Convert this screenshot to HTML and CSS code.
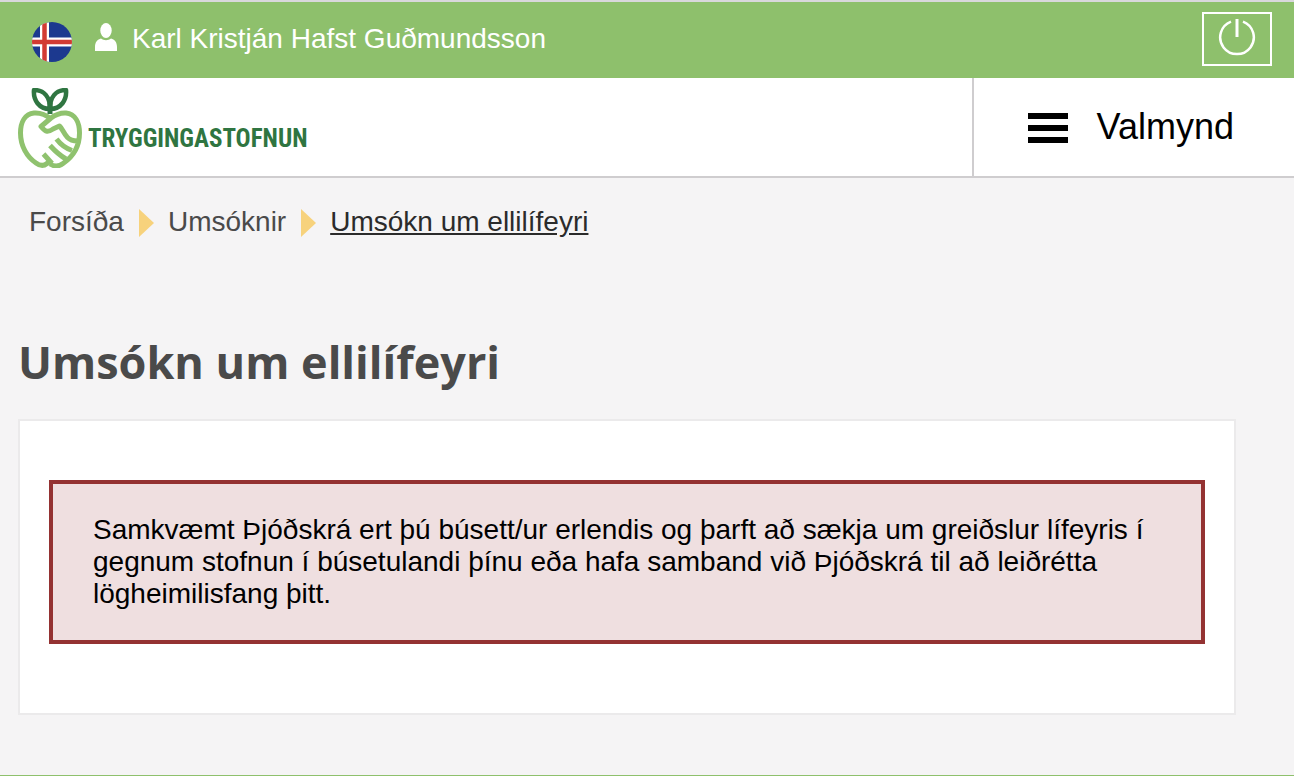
FILE: index.html
```html
<!DOCTYPE html>
<html lang="is">
<head>
  <meta charset="UTF-8" />
  <meta name="viewport" content="width=device-width, initial-scale=1" />
  <title>Umsókn um ellilífeyri</title>
  <link rel="stylesheet" href="styles.css">
</head>
<body>

<div class="top-bar">
  <button class="lang-btn" aria-label="Íslenska">
    <svg width="40" height="40" viewBox="0 0 40 40">
      <clipPath id="flagClip"><circle cx="20" cy="20" r="20" /></clipPath>
      <g clip-path="url(#flagClip)">
        <rect width="40" height="40" fill="#1c398f" />
        <path d="M12.5 0v40M0 20h40" stroke="#fff" stroke-width="9" />
        <path d="M12.5 0v40M0 20h40" stroke="#d23b33" stroke-width="4.500" />
      </g>
    </svg>
  </button>
  <div class="user">
    <svg width="22" height="28" viewBox="0 0 22 28" fill="#fff">
      <ellipse cx="11" cy="7.5" rx="5.7" ry="7.5" />
      <path d="M0 28v-4c0-5 2.500-7.700 6-8.500 3 2.200 7 2.200 10 0 3.500.8 6 3.500 6 8.500v4z" />
    </svg>
    <span>Karl Kristján Hafst Guðmundsson</span>
  </div>
  <button class="logout-btn" aria-label="Útskráning">
    <svg width="38" height="38" viewBox="0 0 38 38" fill="none" stroke="#fff" stroke-width="2.500">
      <path d="M13 3.600A16.800 16.800 0 1 0 25 3.600" />
      <path d="M19 1v18" stroke-width="3" />
    </svg>
  </button>
</div>

<header class="header">
  <a class="logo" href="#">
    <svg width="64" height="80" viewBox="0 0 64 80" fill="none" stroke-linejoin="round">
      <g stroke="#8fc26e" stroke-width="5">
        <path d="M33 31C27 26 22 24.500 16 25C7 26 2.500 34 2.500 45C2.500 58 9 69 18 75C22 78 26 78 29 75.500L32 73" />
        <path d="M32 76C36 78.500 41 78.500 45 75.500C56 68 61.500 57 61.500 45C61.500 34 57 26 48 25C41 24.500 37 27 33 30L23 38.500C25 41 27 43 29 43.300C32 43.500 33 42.500 35 41L41.500 38C44 40 46 46 49.500 49.500C52 52 56 53 59.500 53" />
        <path d="M38.500 51C43 57 47 60 54 62.500" />
        <path d="M32 57.500C37 63 41 67 48 71" />
        <path d="M25.500 66L34 75.500" />
      </g>
      <g stroke="#2f7541" stroke-width="4.500">
        <path d="M32 21C21 21 15 12 16 2C26 2 32 9 32 21Z" />
        <path d="M32 21C43 21 49 12 48 2C38 2 32 9 32 21Z" />
        <path d="M32 15v11" stroke-width="5" />
      </g>
    </svg>
    <span>TRYGGINGASTOFNUN</span>
  </a>
  <button class="menu-btn">
    <svg width="40" height="30" viewBox="0 0 40 30">
      <path d="M0 0h40v6H0zM0 12h40v6H0zM0 24h40v6H0z" />
    </svg>
    <span>Valmynd</span>
  </button>
</header>

<main class="content">
  <nav class="breadcrumb">
    <a href="#">Forsíða</a>
    <span class="arrow"></span>
    <a href="#">Umsóknir</a>
    <span class="arrow"></span>
    <a class="current" href="#">Umsókn um ellilífeyri</a>
  </nav>

  <h1>Umsókn um ellilífeyri</h1>

  <section class="panel">
    <div class="alert">
      Samkvæmt Þjóðskrá ert þú búsett/ur erlendis og þarft að sækja um greiðslur lífeyris í gegnum stofnun í búsetulandi þínu eða hafa samband við Þjóðskrá til að leiðrétta lögheimilisfang þitt.
    </div>
  </section>
</main>

<footer class="footer"></footer>

</body>
</html>
```
FILE: styles.css
```css
* {
  margin: 0;
  padding: 0;
  box-sizing: border-box;
}
body {
  min-height: 100vh;
  display: flex;
  flex-direction: column;
  background: #f5f4f5;
  color: #000;
  font-family: "Liberation Sans", Arial, sans-serif;
  font-size: 28px;
  line-height: 32px;
}
svg {
  display: block;
  flex-shrink: 0;
}
button {
  background: none;
  border: none;
  font: inherit;
  color: inherit;
  cursor: pointer;
}
a {
  color: inherit;
  text-decoration: none;
}

/* Top bar */
.top-bar {
  display: flex;
  align-items: center;
  height: 78px;
  padding: 0 22px 0 32px;
  border-top: 2px solid #d9d8dc;
  background: #8ec06c;
  color: #fff;
}
.lang-btn {
  margin-top: 4px;
}
.user {
  flex: 1;
  display: flex;
  align-items: center;
  gap: 15px;
  margin-left: 23px;
  padding-bottom: 2px;
}
.user svg {
  margin-bottom: 4px;
}
.logout-btn {
  display: flex;
  justify-content: center;
  width: 70px;
  height: 54px;
  margin-bottom: 2px;
  padding-top: 4px;
  border: 2px solid #fff;
}

/* Header */
.header {
  display: flex;
  justify-content: space-between;
  height: 100px;
  background: #fff;
  border-bottom: 2px solid #cfcdcf;
}
.logo {
  display: flex;
  align-items: center;
  gap: 6px;
  padding: 2px 0 0 18px;
  color: #2f7541;
}
.logo span {
  padding-top: 22px;
  font-family: "Roboto Condensed", "Liberation Sans Narrow", "Liberation Sans", sans-serif;
  font-size: 25px;
  font-weight: 700;
}
.menu-btn {
  display: flex;
  align-items: center;
  gap: 29px;
  padding: 0 60px 0 54px;
  border-left: 2px solid #cfcdcf;
  font-size: 36px;
}
.menu-btn svg {
  margin-top: 2px;
}

/* Content */
.content {
  flex: 1;
  padding: 28px 58px 60px 18px;
}
.breadcrumb {
  display: flex;
  align-items: center;
  gap: 15px;
  padding-left: 11px;
  color: #4a4a4a;
}
.arrow {
  margin: 2px -1px 0 0;
  border-left: 15px solid #f7d27c;
  border-top: 14px solid transparent;
  border-bottom: 14px solid transparent;
}
.current {
  color: #2b2b2b;
  text-decoration: underline;
}
h1 {
  margin: 94px 0 27px;
  color: #4a4a4a;
  font-family: "Trebuchet MS", "Open Sans", sans-serif;
  font-size: 45px;
  font-weight: 700;
  line-height: 60px;
}
.panel {
  padding: 59px 29px 69px;
  background: #fff;
  border: 2px solid #ebeaeb;
}
.alert {
  padding: 30px 40px;
  background: #efdfe0;
  border: 4px solid #943232;
}

.footer {
  border-top: 1px solid #8ec06c;
}
```
